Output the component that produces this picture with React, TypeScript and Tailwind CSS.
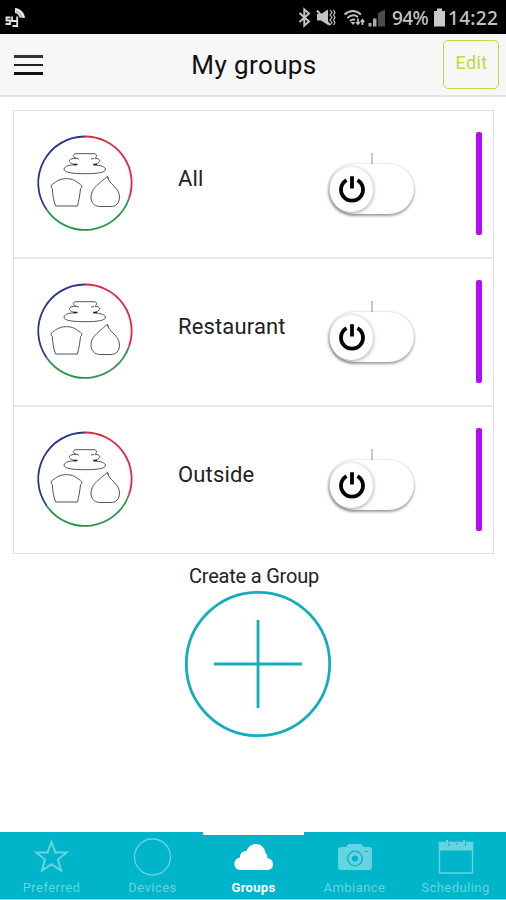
import React from "react";

const groups = ["All", "Restaurant", "Outside"];

function StatusBar() {
  return (
    <div className="flex h-[34px] shrink-0 bg-black text-[#c4c4c4]">
      <svg className="h-[34px] w-8 shrink-0" viewBox="0 0 32 34" fill="none" stroke="#e5e5e5">
        <path d="M10.500 17.500H6.500V20.500H10V24H5.500M12 16.500V21H17M17.200 16.500V26H12.500" strokeWidth="1.800" />
        <path d="M15 8C20.500 8.500 24.500 12.500 25 18L19.500 17.500C19 15 17.500 13.500 15 13Z" fill="#e5e5e5" stroke="none" />
        <path d="M16 11.200Q21 12.500 22 17.500" stroke="#777" strokeWidth="0.700" />
      </svg>
      <svg className="ml-auto h-[34px] w-[92px] shrink-0" viewBox="295 0 92 34" fill="none" stroke="#c4c4c4">
        <path d="M299.500 13L309 21.500L304.300 25.500V9.500L309 13.500L299.500 22" strokeWidth="2" />
        <path d="M317 14H321L328 9.500V25L321 20.500H317Z" fill="#c4c4c4" stroke="none" />
        <path d="M317 10.500L330 25" stroke="#c4c4c4" strokeWidth="2" />
        <path d="M330 10L332 12.500L330 15L332 17.500L330 20L332 22.500L330 25M333.500 10L335 12.500L333.500 15L335 17.500L333.500 20L335 22.500L333.500 25" strokeWidth="1.200" />
        <path d="M344.500 14.500Q353 7.500 361 14.500M347.300 18Q353 13.200 358 17M350 21Q353 18.700 355 20" strokeWidth="1.900" />
        <path d="M350.500 22L353 25L355.500 22Z" fill="#c4c4c4" stroke="none" />
        <path d="M358 18.500V24M356.300 22L358 24.200L359.700 22M362.500 25V20M360.800 22L362.500 19.800L364.200 22" strokeWidth="1.700" />
        <path d="M368.500 23H371.500V26.500H368.500ZM373 18.500H376.500V26.500H373Z" fill="#aaa" stroke="none" />
        <path d="M378 13L385 9.500V26.500H378Z" fill="#4d4d4d" stroke="none" />
      </svg>
      <span className="ml-[5px] w-[42px] shrink-0 whitespace-nowrap pt-[5px] font-['Noto_Sans',sans-serif] text-[19px] leading-[26px] tracking-[-0.600px] font-medium">94%</span>
      <svg className="h-[34px] w-[14px] shrink-0" viewBox="0 0 14 34">
        <path d="M0 11H3V8.500H8V11H11V26.500H0Z" fill="#c9c9c9" />
      </svg>
      <span className="w-[58px] shrink-0 whitespace-nowrap pt-[5px] font-['Noto_Sans',sans-serif] text-[19px] leading-[26px] tracking-[0.300px] font-medium">14:22</span>
    </div>
  );
}

function Header() {
  return (
    <header className="flex h-[63px] shrink-0 items-center justify-between border-b-2 border-[#e2e2e2] bg-[#f7f7f7] pl-[14px] pr-[7px]">
      <button className="flex w-[51px] flex-col gap-[6px] pt-[1px]" aria-label="Menu">
        <span className="h-[2.500px] w-[29px] bg-[#333]" />
        <span className="h-[2.500px] w-[29px] bg-[#222]" />
        <span className="h-[2.500px] w-[29px] bg-[#111]" />
      </button>
      <h1 className="whitespace-nowrap text-[26px] leading-[30px] tracking-[0.400px] text-[#111]">My groups</h1>
      <button className="flex h-[49px] w-[56px] justify-center rounded-[5px] border-[1.500px] border-[#c5d84b] pl-px pt-[9px] text-[18px] leading-[26px] tracking-[0.400px] text-[#c3d645]">
        Edit
      </button>
    </header>
  );
}

function DevicesIcon() {
  return (
    <svg className="h-[98px] w-[98px] shrink-0" viewBox="36 134 98 98" fill="none">
      <g strokeWidth="1.800">
        <path d="M85 136.500A46.500 46.500 0 0 1 129 198.500" stroke="#e22440" />
        <path d="M129 198.500A46.500 46.500 0 0 1 46.500 209.500" stroke="#249849" />
        <path d="M46.500 209.500A46.500 46.500 0 0 1 85 136.500" stroke="#28368e" />
      </g>
      <g stroke="#555" strokeWidth="1" strokeLinejoin="round">
        <path d="M76 153.700H94C97 153.700 97.500 156.500 95 158.200C99 158.500 101 160.500 99 162.200C97 164 95 164.500 93 164.700C98 165 104.500 166 105.500 169C106 173 95 173.700 85 173.700C75 173.700 63.500 173 64 169C65 165.500 70 165 76 164.700C71 164 69 162 69.500 160.500C70 158.500 73 158.500 76 158.200C72 156.500 73 154 76 153.700Z" />
        <path d="M76 158.200L79 159.200M94 158.200L91 159.200" />
        <path d="M73.500 164.600H77.500M93.500 164.600H97" stroke="#222" strokeWidth="1.500" />
        <path d="M51 187C51 184 54 183.500 55.500 182C61 177.500 72 177.500 77 182C79.500 184.500 82 184 82 187L80.500 188.500C80 194 79 200 77.500 206H55.500C53.500 200 52.500 194 52.300 188.500Z" />
        <path d="M107.500 176.500C108.500 184.500 119.500 187 119.500 197C119.500 203 116 206.500 111 206.500H99.500C94 206 91 202.500 91 197C91 189 98 184.500 102.500 180.500C105 178.500 106 177.500 107.500 176.500ZM107.500 176.500L108.500 179" />
      </g>
    </svg>
  );
}

function PowerSwitch() {
  return (
    <button className="flex w-[85px] shrink-0 flex-col" aria-label="Toggle power">
      <span className="ml-[42px] h-[11px] w-[1.500px] bg-[#c5c5c5]" />
      <span className="flex h-[50px] w-[85px] items-center rounded-full bg-white pl-px shadow-[0_2px_3px_rgba(0,0,0,0.36),0_0_3px_rgba(0,0,0,0.16)]">
        <span className="flex h-[45px] w-[43px] items-center justify-center rounded-full bg-white shadow-[0_1px_4px_rgba(0,0,0,0.4)]">
          <svg className="h-[30px] w-[30px]" viewBox="0 0 30 30" fill="none" stroke="black" strokeWidth="3.800">
            <path d="M9.500 6.100A11 11 0 1 0 20.500 6.100M15 2.300V14.500" />
          </svg>
        </span>
      </span>
    </button>
  );
}

function GroupRow({ name }: { name: string }) {
  return (
    <li className="flex min-h-0 flex-1 border-b-2 border-[#e9e9e9] pl-[22px] pr-[11px] last:border-b-0">
      <div className="pt-[23px]"><DevicesIcon /></div>
      <span className="ml-[44px] w-[151px] pt-[54px] text-[22px] leading-[28px] tracking-[0.150px] text-[#222]">{name}</span>
      <div className="pt-[42px]"><PowerSwitch /></div>
      <span className="ml-auto mt-[21px] h-[103px] w-[6px] rounded-[2px] bg-[#b30cf8]" />
    </li>
  );
}

const tabs = [
  {
    name: "Preferred",
    icon: <path d="M19.500 2L23.500 12.500H34.500L26 19.500L29 30.500L19.500 24.300L10 30.500L13 19.500L4.500 12.500H15.500Z" strokeWidth="2" />,
  },
  { name: "Devices", icon: <circle cx="19.500" cy="17" r="18" strokeWidth="1.300" /> },
  {
    name: "Groups",
    icon: <path d="M6.500 30C-1 30-2 19 6 17.500C6 13 9 11 12.500 11C16 1 30 2 31.500 13C34 15 33.500 17 33 18C41 19 41 30 33.500 30Z" fill="currentColor" stroke="none" />,
  },
  {
    name: "Ambiance",
    icon: (
      <>
        <path d="M6 7H11L13.500 4H26L28.500 7H34Q37 7 37 10V27Q37 30 34 30H6Q3 30 3 27V10Q3 7 6 7Z" fill="currentColor" stroke="none" />
        <circle cx="20" cy="18.500" r="7.300" stroke="#00b5ca" strokeWidth="1.300" />
        <circle cx="20" cy="18.500" r="3" fill="#00b5ca" stroke="none" />
        <path d="M30 11.500H33" stroke="#00b5ca" />
      </>
    ),
  },
  {
    name: "Scheduling",
    icon: (
      <>
        <path d="M3.500 2.500H36.500V33H3.500Z" strokeWidth="1.400" />
        <path d="M2.800 2H37.200V10.500H2.800Z" fill="currentColor" stroke="none" />
        <path d="M11 0V5M28 0V5" strokeWidth="2" />
        <path d="M13 3V6M21 3V5M29.500 3V6" stroke="#0ab6ca" strokeWidth="1.200" />
      </>
    ),
  },
];

function TabBar() {
  return (
    <nav className="flex h-[67px] shrink-0 bg-[#00b5ca] pl-px">
      {tabs.map((tab) => {
        const active = tab.name === "Groups";
        return (
          <button
            key={tab.name}
            className={`flex min-w-0 flex-1 flex-col items-center border-t-[3px] ${active ? "border-white font-bold text-white" : "border-[#00b5ca] text-[#66d4e0]"}`}
          >
            <svg className="mt-[5px] h-[36px] w-[40px] shrink-0 overflow-visible" viewBox="0 0 40 36" fill="none" stroke="currentColor">
              {tab.icon}
            </svg>
            <span className={`mt-[4px] whitespace-nowrap text-[13px] leading-[16px] ${active ? "tracking-[0.350px]" : "tracking-[0.450px]"}`}>{tab.name}</span>
          </button>
        );
      })}
    </nav>
  );
}

export default function App() {
  return (
    <div className="flex h-[900px] w-[506px] flex-col overflow-hidden bg-white font-[Roboto,sans-serif]">
      <StatusBar />
      <Header />
      <main className="flex min-h-0 flex-1 flex-col items-center">
        <ul className="ml-px mt-[13px] flex h-[444px] w-[481px] shrink-0 flex-col border-[1.500px] border-[#dfdfdf]">
          {groups.map((name) => <GroupRow key={name} name={name} />)}
        </ul>
        <p className="ml-[2px] mt-[9px] text-[20px] leading-[26px] tracking-[-0.200px] text-[#222]">Create a Group</p>
        <button className="ml-[9px] mt-px" aria-label="Create a Group">
          <svg className="h-[148px] w-[148px]" viewBox="0 0 148 148" fill="none" stroke="#14adbd" strokeWidth="2.800">
            <circle cx="74" cy="74" r="71.700" />
            <path d="M30 74H118M74 30V118" />
          </svg>
        </button>
      </main>
      <TabBar />
      <div className="h-px shrink-0 bg-[#88dce7]" />
    </div>
  );
}
